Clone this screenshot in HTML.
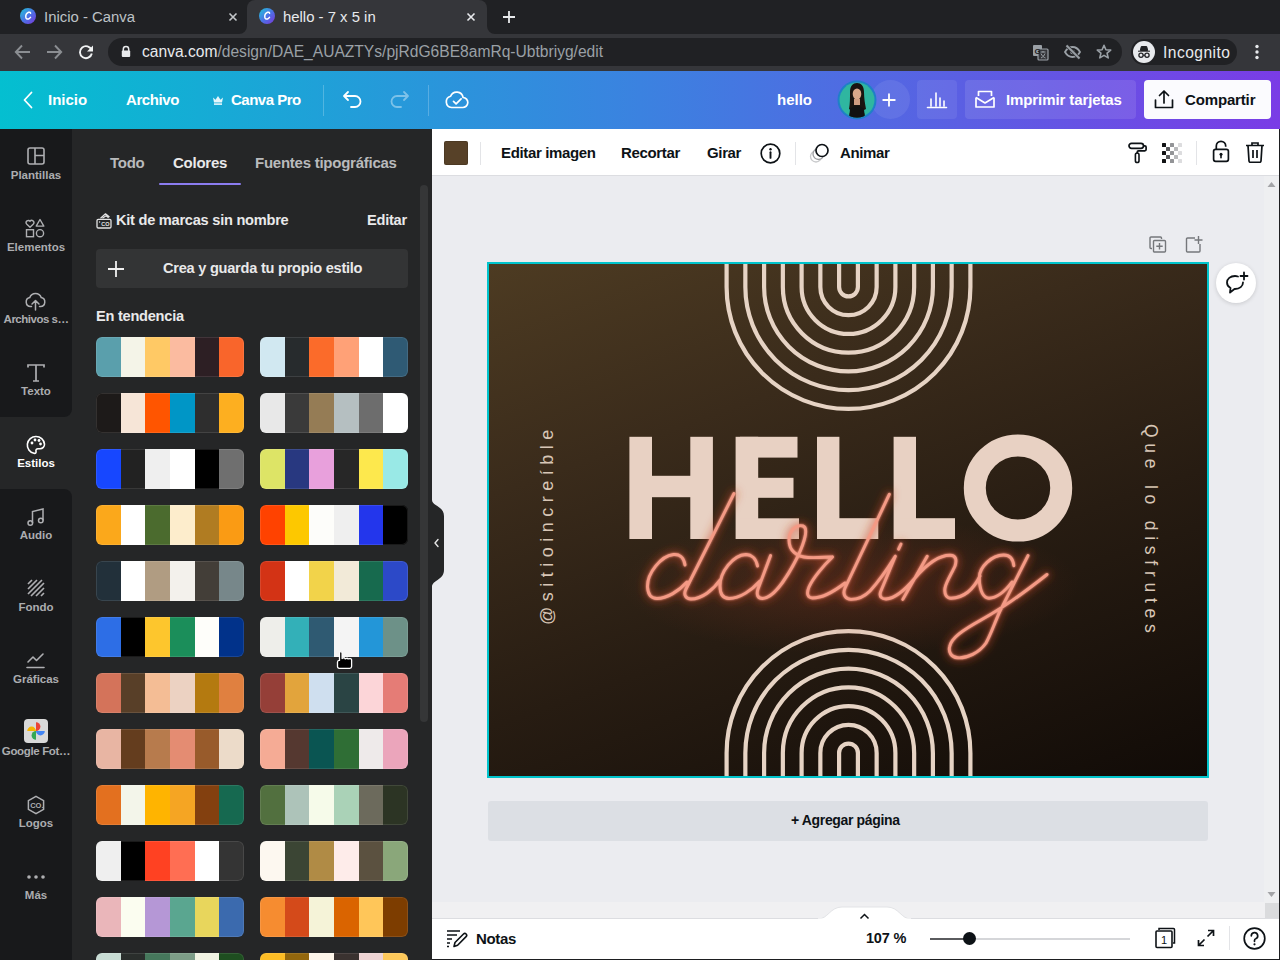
<!DOCTYPE html>
<html><head><meta charset="utf-8">
<style>
*{margin:0;padding:0;box-sizing:border-box}
html,body{width:1280px;height:960px;overflow:hidden;background:#ebecf0;font-family:"Liberation Sans",sans-serif}
.a{position:absolute}
svg{display:block}
/* chrome */
#tabs{left:0;top:0;width:1280px;height:34px;background:#202124}
#tb{left:0;top:34px;width:1280px;height:37px;background:#35363a}
.ttl{font-size:14px;color:#bdc1c6;white-space:nowrap}
/* header */
#hdr{left:0;top:71px;width:1280px;height:58px;background:linear-gradient(90deg,#04bfd0 0%,#3b82e0 50%,#7a3ce6 100%)}
.ht{color:#fff;font-weight:700;font-size:15px;white-space:nowrap}
/* sidebar */
#side{left:0;top:129px;width:72px;height:831px;background:#252627}
.sb{background:#18191b}
.si{position:absolute;left:0;width:72px;text-align:center;color:#a9aaad;font-size:11.5px;font-weight:700;white-space:nowrap}
/* panel */
#panel{left:72px;top:129px;width:360px;height:831px;background:#252627;overflow:hidden}
.pt{color:#c9cacc;font-size:15px;font-weight:700;white-space:nowrap;letter-spacing:-.25px}
.pal{position:absolute;width:148px;height:40px;border-radius:6px;overflow:hidden;display:flex}
.pal i{flex:1;display:block}
.pal:after{content:"";position:absolute;left:0;top:0;right:0;bottom:0;border-radius:6px;box-shadow:inset 0 0 0 1px rgba(255,255,255,.1)}
/* canvas */
#tool{left:432px;top:129px;width:848px;height:47px;background:#fff;border-bottom:1px solid #dcdde1}
.tt{color:#0d1216;font-size:15px;font-weight:700;white-space:nowrap;letter-spacing:-.35px}
#bot{left:432px;top:918px;width:848px;height:42px;background:#fff;border-top:1px solid #dcdde1}
</style></head><body>

<!-- CHROME TABS -->
<div id="tabs" class="a"></div>
<div class="a" style="left:247px;top:0px;width:240px;height:34px;background:#35363a;border-radius:8px 8px 0 0"></div>
<svg class="a" style="left:239px;top:26px" width="8" height="8"><path d="M0 8 A8 8 0 0 0 8 0 V8Z" fill="#35363a"/></svg>
<svg class="a" style="left:487px;top:26px" width="8" height="8"><path d="M8 8 A8 8 0 0 1 0 0 V8Z" fill="#35363a"/></svg>
<svg class="a" style="left:20px;top:8px" width="16" height="16"><defs><linearGradient id="cg" x1="0" y1="0" x2="1" y2="1"><stop offset="0" stop-color="#1ec7d8"/><stop offset=".55" stop-color="#4f6de6"/><stop offset="1" stop-color="#7b35d8"/></linearGradient></defs><circle cx="8" cy="8" r="8" fill="url(#cg)"/><path d="M10.6 5.2c-.3-.9-1.2-1.2-2-.9C6.9 5 5.6 7.3 5.8 9.3c.2 1.7 1.9 2.2 3.4 1.3.6-.3 1-.8 1.3-1.2" fill="none" stroke="#fff" stroke-width="1.5" stroke-linecap="round"/></svg>
<svg class="a" style="left:259px;top:8px" width="16" height="16"><circle cx="8" cy="8" r="8" fill="url(#cg)"/><path d="M10.6 5.2c-.3-.9-1.2-1.2-2-.9C6.9 5 5.6 7.3 5.8 9.3c.2 1.7 1.9 2.2 3.4 1.3.6-.3 1-.8 1.3-1.2" fill="none" stroke="#fff" stroke-width="1.5" stroke-linecap="round"/></svg>
<div class="a ttl" style="left:44px;top:9px;font-size:14.9px">Inicio - Canva</div>
<div class="a ttl" style="left:283px;top:9px;font-size:14.9px;color:#e8eaed">hello - 7 x 5 in</div>
<svg class="a" style="left:228px;top:12px" width="10" height="10"><path d="M1.5 1.5l7 7M8.5 1.5l-7 7" stroke="#c4c7ca" stroke-width="1.6"/></svg>
<svg class="a" style="left:466px;top:12px" width="10" height="10"><path d="M1.5 1.5l7 7M8.5 1.5l-7 7" stroke="#e8eaed" stroke-width="1.6"/></svg>
<svg class="a" style="left:502px;top:10px" width="14" height="14"><path d="M7 1v12M1 7h12" stroke="#e8eaed" stroke-width="1.8"/></svg>

<div id="tb" class="a"></div>
<svg class="a" style="left:14px;top:44px" width="17" height="16"><path d="M16 8H2M8 1.5L1.8 8 8 14.5" fill="none" stroke="#8b8e92" stroke-width="1.9"/></svg>
<svg class="a" style="left:46px;top:44px" width="17" height="16"><path d="M1 8h14M9 1.5L15.2 8 9 14.5" fill="none" stroke="#8b8e92" stroke-width="1.9"/></svg>
<svg class="a" style="left:78px;top:44px" width="16" height="16"><path d="M13.6 6.2A6 6 0 1 0 13.8 9.5" fill="none" stroke="#f1f3f4" stroke-width="1.9"/><path d="M15 1.5v6h-6z" fill="#f1f3f4"/></svg>
<div class="a" style="left:108px;top:38px;width:1014px;height:28px;background:#202124;border-radius:14px"></div>
<svg class="a" style="left:121px;top:45px" width="10" height="13"><path d="M2.3 6V4.2a2.7 2.7 0 0 1 5.4 0V6" fill="none" stroke="#e8eaed" stroke-width="1.5"/><rect x="0.8" y="5.6" width="8.4" height="6.4" rx="1" fill="#e8eaed"/></svg>
<div class="a ttl" style="left:142px;top:43px;font-size:15.6px;color:#e8eaed">canva.com<span style="color:#9aa0a6">/design/DAE_AUAZTYs/pjRdG6BE8amRq-Ubtbriyg/edit</span></div>
<svg class="a" style="left:1032px;top:44px" width="17" height="17"><rect x="1" y="1" width="9" height="11" rx="1" fill="#9aa0a6"/><rect x="6" y="5" width="10" height="11" rx="1" fill="#35363a" stroke="#9aa0a6" stroke-width="1.2"/><text x="2.5" y="10" font-size="8" font-weight="bold" fill="#202124" font-family="Liberation Sans">G</text><path d="M8.5 8h5M11 7v1.5M9 9.5c1 2.5 3 4 4.5 4.5M13 9.5c-.8 2-2 3.5-4 4.5" stroke="#9aa0a6" stroke-width="1" fill="none"/></svg>
<svg class="a" style="left:1064px;top:44px" width="17" height="16"><path d="M1 8c2-3.5 4.5-5 7.5-5s5.5 1.5 7.5 5c-2 3.5-4.5 5-7.5 5S3 11.5 1 8z" fill="none" stroke="#9aa0a6" stroke-width="1.8"/><circle cx="8.5" cy="8" r="2.3" fill="#9aa0a6"/><path d="M2.5 1.5l13 13" stroke="#35363a" stroke-width="3.5"/><path d="M2.5 1.5l13 13" stroke="#9aa0a6" stroke-width="1.8"/></svg>
<svg class="a" style="left:1096px;top:44px" width="16" height="16"><path d="M8 1.3l1.9 4.4 4.8.4-3.6 3.1 1.1 4.7L8 11.4l-4.2 2.5 1.1-4.7L1.3 6.1l4.8-.4z" fill="none" stroke="#9aa0a6" stroke-width="1.6" stroke-linejoin="round"/></svg>
<div class="a" style="left:1131px;top:39px;width:106px;height:26px;background:#202124;border-radius:13px"></div>
<svg class="a" style="left:1133px;top:41px" width="22" height="22"><circle cx="11" cy="11" r="11" fill="#e8eaed"/><path d="M5 10.2h12M7.3 9.5l1-4h5.4l1 4z" fill="#202124" stroke="#202124" stroke-width="1"/><circle cx="8" cy="14.3" r="2.1" fill="none" stroke="#202124" stroke-width="1.3"/><circle cx="14" cy="14.3" r="2.1" fill="none" stroke="#202124" stroke-width="1.3"/><path d="M10 14.3h2" stroke="#202124" stroke-width="1.1"/></svg>
<div class="a ttl" style="left:1163px;top:44px;font-size:15.6px;letter-spacing:.45px;color:#e8eaed">Incognito</div>
<svg class="a" style="left:1254px;top:44px" width="6" height="16"><circle cx="3" cy="2.5" r="1.7" fill="#e8eaed"/><circle cx="3" cy="8" r="1.7" fill="#e8eaed"/><circle cx="3" cy="13.5" r="1.7" fill="#e8eaed"/></svg>

<!-- CANVA HEADER -->
<div id="hdr" class="a"></div>
<svg class="a" style="left:22px;top:91px" width="12" height="18"><path d="M9.5 1.5L2.5 9l7 7.5" fill="none" stroke="#fff" stroke-width="1.8" stroke-linecap="round" stroke-linejoin="round"/></svg>
<div class="a ht" style="left:48px;top:91px">Inicio</div>
<div class="a ht" style="left:126px;top:91px;letter-spacing:-.4px">Archivo</div>
<svg class="a" style="left:212px;top:95px" width="12" height="10"><path d="M1 2.5l2.5 2.2L6 1l2.5 3.7L11 2.5 10 7.5H2z" fill="#e6f6fb"/><rect x="2" y="8.3" width="8" height="1.6" fill="#e6f6fb"/></svg>
<div class="a ht" style="left:231px;top:91px;letter-spacing:-.5px">Canva Pro</div>
<div class="a" style="left:323px;top:85px;width:1px;height:31px;background:rgba(255,255,255,.22)"></div>
<svg class="a" style="left:342px;top:90px" width="22" height="19"><path d="M6 2L2 6l4 4M2.5 6H13a5.5 5.5 0 0 1 0 11H9" fill="none" stroke="#fff" stroke-width="1.8" stroke-linecap="round" stroke-linejoin="round"/></svg>
<svg class="a" style="left:388px;top:90px" width="22" height="19"><path d="M16 2l4 4-4 4M19.5 6H9a5.5 5.5 0 0 0 0 11H13" fill="none" stroke="rgba(255,255,255,.4)" stroke-width="1.8" stroke-linecap="round" stroke-linejoin="round"/></svg>
<div class="a" style="left:428px;top:85px;width:1px;height:31px;background:rgba(255,255,255,.22)"></div>
<svg class="a" style="left:445px;top:90px" width="24" height="19"><path d="M6.5 17.5h11a5 5 0 0 0 .6-10A6.5 6.5 0 0 0 5.6 6.3 5.7 5.7 0 0 0 6.5 17.5z" fill="none" stroke="#fff" stroke-width="1.7" stroke-linejoin="round"/><path d="M8.5 11.3l2.6 2.6 5-5" fill="none" stroke="#fff" stroke-width="1.7" stroke-linecap="round" stroke-linejoin="round"/></svg>
<div class="a ht" style="left:777px;top:91px">hello</div>
<div class="a" style="left:871px;top:80px;width:39px;height:39px;border-radius:50%;background:rgba(255,255,255,.08)"></div>
<svg class="a" style="left:882px;top:93px" width="14" height="14"><path d="M7 1.2v11.6M1.2 7h11.6" stroke="#fff" stroke-width="1.8" stroke-linecap="round"/></svg>
<svg class="a" style="left:837px;top:80px" width="40" height="40"><defs><clipPath id="av"><circle cx="20" cy="20" r="17.5"/></clipPath></defs><circle cx="20" cy="20" r="19.5" fill="#1f7fc8"/><circle cx="20" cy="20" r="17.5" fill="#2fb6a0"/><g clip-path="url(#av)"><path d="M12 40c0-8 2-13 8-13s8 5 8 13z" fill="#151515"/><path d="M13 12c0-6 3-9 7-9s7 3 7 9c0 6 1 12 2 17l-4 2-5-4-5 4-3-2c1-5 1-11 1-17z" fill="#1a1410"/><ellipse cx="20" cy="14" rx="4.3" ry="5.5" fill="#d9a88a"/><path d="M17 19h6v6h-6z" fill="#cf9c80"/><path d="M13 29c2-2 4-3 7-3s5 1 7 3l1 11H12z" fill="#111"/></g></svg>
<div class="a" style="left:917px;top:80px;width:40px;height:39px;border-radius:4px;background:rgba(255,255,255,.08)"></div>
<svg class="a" style="left:926px;top:89px" width="22" height="20"><path d="M1.5 18.5h19M5 17V10M10 17V4M14 17V9M18 17V12" fill="none" stroke="#fff" stroke-width="1.6" stroke-linecap="round"/></svg>
<div class="a" style="left:965px;top:80px;width:171px;height:39px;background:rgba(255,255,255,.1);border-radius:4px"></div>
<svg class="a" style="left:974px;top:89px" width="22" height="20"><path d="M2 8.5v9.5h18V8.5" fill="none" stroke="#fff" stroke-width="1.7" stroke-linejoin="round"/><path d="M2 8.5L11 14l9-5.5M4.5 7V2.5h13V7" fill="none" stroke="#fff" stroke-width="1.7" stroke-linejoin="round"/></svg>
<div class="a ht" style="left:1006px;top:91px;letter-spacing:-.1px">Imprimir tarjetas</div>
<div class="a" style="left:1144px;top:80px;width:127px;height:39px;background:#fbfbfe;border-radius:4px"></div>
<svg class="a" style="left:1154px;top:89px" width="20" height="20"><path d="M10 14V2M5.5 6.5L10 2l4.5 4.5M1.5 11v7.5h17V11" fill="none" stroke="#0d1216" stroke-width="1.7" stroke-linecap="round" stroke-linejoin="round"/></svg>
<div class="a ht" style="left:1185px;top:91px;color:#0d1216;letter-spacing:-.15px">Compartir</div>

<!-- SIDEBAR -->
<div id="side" class="a">
  <div class="a sb" style="left:0;top:0;width:72px;height:288px;border-bottom-right-radius:8px"></div>
  <div class="a sb" style="left:0;top:360px;width:72px;height:471px;border-top-right-radius:8px"></div>
  <svg class="a" style="left:27px;top:18px" width="18" height="18" viewBox="0 0 18 18"><rect x="1" y="1" width="16" height="16" rx="2" fill="none" stroke="#aeafb2" stroke-width="1.6"/><path d="M8 1v16M8 8.5h9" stroke="#aeafb2" stroke-width="1.6"/></svg>
  <div class="si" style="top:40px;color:#acadb0">Plantillas</div>
  <svg class="a" style="left:25px;top:89px" width="22" height="22" viewBox="0 0 22 22"><path d="M5 9.3L1.6 5.9a2 2 0 0 1 3.4-2.6 2 2 0 0 1 3.4 2.6z" fill="none" stroke="#aeafb2" stroke-width="1.4" stroke-linejoin="round"/><path d="M15 1.5l3.8 6.6h-7.6z" fill="none" stroke="#aeafb2" stroke-width="1.4" stroke-linejoin="round"/><rect x="1.5" y="11.7" width="7" height="7" fill="none" stroke="#aeafb2" stroke-width="1.4"/><circle cx="15" cy="15.2" r="3.6" fill="none" stroke="#aeafb2" stroke-width="1.4"/></svg>
  <div class="si" style="top:112px;color:#acadb0">Elementos</div>
  <svg class="a" style="left:25px;top:162px" width="22" height="22" viewBox="0 0 22 22"><path d="M6.5 15.5H5.5a4.5 4.5 0 0 1-.7-8.9 6 6 0 0 1 11.4 0 4.5 4.5 0 0 1-.7 8.9h-1" fill="none" stroke="#aeafb2" stroke-width="1.5" stroke-linecap="round"/><path d="M10.5 19V10M7 13l3.5-3.5L14 13" fill="none" stroke="#aeafb2" stroke-width="1.5" stroke-linecap="round" stroke-linejoin="round"/></svg>
  <div class="si" style="top:184px;color:#acadb0;letter-spacing:-.5px">Archivos s…</div>
  <svg class="a" style="left:26px;top:234px" width="20" height="20" viewBox="0 0 20 20"><path d="M2 4.5V2h16v2.5M10 2v16M7 18h6" fill="none" stroke="#aeafb2" stroke-width="1.7"/></svg>
  <div class="si" style="top:256px;color:#acadb0">Texto</div>
  <svg class="a" style="left:26px;top:306px" width="20" height="20" viewBox="0 0 20 20"><path d="M10 1.5a8.5 8.5 0 0 0-2 16.8c1.6.4 2.4-.6 2-2-.4-1.3.5-2.6 1.9-2.6h2.2a4.4 4.4 0 0 0 4.4-4.6A8.5 8.5 0 0 0 10 1.5z" fill="none" stroke="#fff" stroke-width="1.6"/><circle cx="6" cy="8" r="1.4" fill="#fff"/><circle cx="9" cy="5" r="1.4" fill="#fff"/><circle cx="13" cy="5.5" r="1.4" fill="#fff"/><circle cx="14.5" cy="9" r="1.4" fill="#fff"/></svg>
  <div class="si" style="top:328px;color:#fff">Estilos</div>
  <svg class="a" style="left:26px;top:378px" width="20" height="20" viewBox="0 0 20 20"><path d="M6.5 16V4.5L17 2v11.5" fill="none" stroke="#aeafb2" stroke-width="1.5"/><circle cx="4.3" cy="16" r="2.3" fill="none" stroke="#aeafb2" stroke-width="1.5"/><circle cx="14.8" cy="13.5" r="2.3" fill="none" stroke="#aeafb2" stroke-width="1.5"/></svg>
  <div class="si" style="top:400px;color:#acadb0">Audio</div>
  <svg class="a" style="left:27px;top:450px" width="18" height="18" viewBox="0 0 18 18"><g stroke="#aeafb2" stroke-width="1.7" stroke-linecap="butt"><path d="M1 5L5 1M1 10l9-9M1 15L15 1M4 17L17 4M9 17l8-8M14 17l3-3"/></g></svg>
  <div class="si" style="top:472px;color:#acadb0">Fondo</div>
  <svg class="a" style="left:26px;top:522px" width="20" height="20" viewBox="0 0 20 20"><path d="M2 11l5-5 3.5 3.5L17 3M1 16.5h17" fill="none" stroke="#aeafb2" stroke-width="1.6" stroke-linecap="round" stroke-linejoin="round"/></svg>
  <div class="si" style="top:544px;color:#acadb0">Gráficas</div>
  <svg class="a" style="left:24px;top:590px" width="24" height="24" viewBox="0 0 24 24"><rect x="0" y="0" width="24" height="24" rx="4" fill="#d9d9d9"/><path d="M12 12H3.2A4.4 4.4 0 0 1 12 12z" fill="#f6b400"/><path d="M12 12V3.2A4.4 4.4 0 0 1 12 12z" fill="#ea4335"/><path d="M12 12h8.8A4.4 4.4 0 0 1 12 12z" fill="#4285f4"/><path d="M12 12v8.8A4.4 4.4 0 0 1 12 12z" fill="#34a853"/></svg>
  <div class="si" style="top:616px;color:#acadb0;letter-spacing:-.35px">Google Fot…</div>
  <svg class="a" style="left:26px;top:666px" width="20" height="20" viewBox="0 0 20 20"><path d="M10 1.3l7.6 4.4v8.6L10 18.7l-7.6-4.4V5.7z" fill="none" stroke="#aeafb2" stroke-width="1.5"/><text x="4.2" y="12.6" font-family="Liberation Sans" font-weight="bold" font-size="7.5" fill="#aeafb2">CO.</text></svg>
  <div class="si" style="top:688px;color:#acadb0">Logos</div>
  <svg class="a" style="left:26px;top:738px" width="20" height="20" viewBox="0 0 20 20"><circle cx="3" cy="10" r="1.8" fill="#aeafb2"/><circle cx="10" cy="10" r="1.8" fill="#aeafb2"/><circle cx="17" cy="10" r="1.8" fill="#aeafb2"/></svg>
  <div class="si" style="top:760px;color:#acadb0">Más</div>
</div>

<!-- PANEL -->
<div id="panel" class="a">
  <div class="a pt" style="left:38px;top:25px;color:#b9babc">Todo</div>
  <div class="a pt" style="left:101px;top:25px;color:#e9e9ea">Colores</div>
  <div class="a pt" style="left:183px;top:25px;color:#b9babc">Fuentes tipográficas</div>
  <div class="a" style="left:87px;top:54px;width:82px;height:2px;background:#8b7cf0;border-radius:1px"></div>
  <svg class="a" style="left:24px;top:83px" width="16" height="17" viewBox="0 0 16 17"><path d="M4.5 6.2L9.5 1.8l4 3.2M6.5 6.2l3.5-2.4 2.6 2" fill="none" stroke="#e3e3e4" stroke-width="1.2" stroke-linejoin="round"/><rect x="1" y="7.3" width="14" height="8.7" rx="1.3" fill="none" stroke="#e3e3e4" stroke-width="1.3"/><text x="5.2" y="14" font-family="Liberation Sans" font-weight="bold" font-size="5.5" fill="#e3e3e4">CO</text><circle cx="3.6" cy="10" r=".7" fill="#e3e3e4"/></svg>
  <div class="a pt" style="left:44px;top:83px;font-size:14.6px;color:#e9e9ea">Kit de marcas sin nombre</div>
  <div class="a pt" style="left:295px;top:83px;font-size:14.6px;color:#e9e9ea">Editar</div>
  <div class="a" style="left:24px;top:120px;width:312px;height:39px;background:#333435;border-radius:4px"></div>
  <svg class="a" style="left:36px;top:132px" width="16" height="16"><path d="M8 0v16M0 8h16" stroke="#f0f0f0" stroke-width="1.8"/></svg>
  <div class="a pt" style="left:91px;top:131px;font-size:14.6px;color:#e9e9ea">Crea y guarda tu propio estilo</div>
  <div class="a pt" style="left:24px;top:179px;font-size:14.6px;color:#e9e9ea">En tendencia</div>
  <div class="a" style="left:348px;top:56px;width:8px;height:537px;background:#353637;border-radius:4px"></div>
  <div class="pal" style="left:24px;top:208px"><i style="background:#5a9fac"></i><i style="background:#f4f4e8"></i><i style="background:#ffc965"></i><i style="background:#fbbba0"></i><i style="background:#2d1f24"></i><i style="background:#f9652b"></i></div>
  <div class="pal" style="left:188px;top:208px"><i style="background:#d1e8f1"></i><i style="background:#272b2d"></i><i style="background:#fb6b2a"></i><i style="background:#ffa177"></i><i style="background:#ffffff"></i><i style="background:#2f5a74"></i></div>
  <div class="pal" style="left:24px;top:264px"><i style="background:#1d1a19"></i><i style="background:#f6e5d7"></i><i style="background:#ff5500"></i><i style="background:#0096c6"></i><i style="background:#2e2e2e"></i><i style="background:#fdaf20"></i></div>
  <div class="pal" style="left:188px;top:264px"><i style="background:#e8e8e8"></i><i style="background:#3a3a3a"></i><i style="background:#957c55"></i><i style="background:#b5bfc1"></i><i style="background:#6d6d6d"></i><i style="background:#ffffff"></i></div>
  <div class="pal" style="left:24px;top:320px"><i style="background:#1747ff"></i><i style="background:#222222"></i><i style="background:#efefef"></i><i style="background:#ffffff"></i><i style="background:#000000"></i><i style="background:#6f6f6f"></i></div>
  <div class="pal" style="left:188px;top:320px"><i style="background:#dde466"></i><i style="background:#283880"></i><i style="background:#e8a0dc"></i><i style="background:#272727"></i><i style="background:#fde84d"></i><i style="background:#99e9e6"></i></div>
  <div class="pal" style="left:24px;top:376px"><i style="background:#fba81b"></i><i style="background:#ffffff"></i><i style="background:#4b6b2e"></i><i style="background:#fdedcc"></i><i style="background:#b07c22"></i><i style="background:#fa9b14"></i></div>
  <div class="pal" style="left:188px;top:376px"><i style="background:#ff4200"></i><i style="background:#fdc800"></i><i style="background:#fdfdfa"></i><i style="background:#efefef"></i><i style="background:#2336ec"></i><i style="background:#000000"></i></div>
  <div class="pal" style="left:24px;top:432px"><i style="background:#22303a"></i><i style="background:#ffffff"></i><i style="background:#b09c82"></i><i style="background:#f3f1ec"></i><i style="background:#433e38"></i><i style="background:#77878a"></i></div>
  <div class="pal" style="left:188px;top:432px"><i style="background:#d33315"></i><i style="background:#ffffff"></i><i style="background:#f2d34a"></i><i style="background:#f2ead8"></i><i style="background:#176a4e"></i><i style="background:#2c49c8"></i></div>
  <div class="pal" style="left:24px;top:488px"><i style="background:#2d6ee6"></i><i style="background:#000000"></i><i style="background:#fdc62d"></i><i style="background:#1b8e5a"></i><i style="background:#fefefa"></i><i style="background:#01328a"></i></div>
  <div class="pal" style="left:188px;top:488px"><i style="background:#eeeeea"></i><i style="background:#33b0b8"></i><i style="background:#2f5a72"></i><i style="background:#f4f4f4"></i><i style="background:#2396d8"></i><i style="background:#6d9188"></i></div>
  <div class="pal" style="left:24px;top:544px"><i style="background:#d4735a"></i><i style="background:#583f28"></i><i style="background:#f4bd95"></i><i style="background:#ecd2c2"></i><i style="background:#b47a10"></i><i style="background:#e08040"></i></div>
  <div class="pal" style="left:188px;top:544px"><i style="background:#953f38"></i><i style="background:#e2a43c"></i><i style="background:#cfdfef"></i><i style="background:#2a4444"></i><i style="background:#fcd5d8"></i><i style="background:#e57c76"></i></div>
  <div class="pal" style="left:24px;top:600px"><i style="background:#e8b5a3"></i><i style="background:#643d1e"></i><i style="background:#b77b4d"></i><i style="background:#e48c72"></i><i style="background:#985b2b"></i><i style="background:#ecdbc9"></i></div>
  <div class="pal" style="left:188px;top:600px"><i style="background:#f5ab95"></i><i style="background:#553830"></i><i style="background:#0a5552"></i><i style="background:#2f6e35"></i><i style="background:#eeeaea"></i><i style="background:#eba5bb"></i></div>
  <div class="pal" style="left:24px;top:656px"><i style="background:#e3701f"></i><i style="background:#f3f5ea"></i><i style="background:#ffb400"></i><i style="background:#f5a523"></i><i style="background:#83400f"></i><i style="background:#166950"></i></div>
  <div class="pal" style="left:188px;top:656px"><i style="background:#52703f"></i><i style="background:#adc3b9"></i><i style="background:#f6fbea"></i><i style="background:#aad2b7"></i><i style="background:#6c6a5c"></i><i style="background:#2c3424"></i></div>
  <div class="pal" style="left:24px;top:712px"><i style="background:#efefef"></i><i style="background:#000000"></i><i style="background:#ff4122"></i><i style="background:#ff6e53"></i><i style="background:#ffffff"></i><i style="background:#343434"></i></div>
  <div class="pal" style="left:188px;top:712px"><i style="background:#fdf8f0"></i><i style="background:#3b4534"></i><i style="background:#b08b45"></i><i style="background:#feecea"></i><i style="background:#5b5140"></i><i style="background:#8aa77a"></i></div>
  <div class="pal" style="left:24px;top:768px"><i style="background:#eab6ba"></i><i style="background:#fbfdf0"></i><i style="background:#b597d6"></i><i style="background:#5aa690"></i><i style="background:#e8d65c"></i><i style="background:#3b6aae"></i></div>
  <div class="pal" style="left:188px;top:768px"><i style="background:#f68c30"></i><i style="background:#d44a1a"></i><i style="background:#f5f3d8"></i><i style="background:#da6400"></i><i style="background:#ffc659"></i><i style="background:#7d3d00"></i></div>
  <div class="pal" style="left:24px;top:824px"><i style="background:#c8dcd4"></i><i style="background:#2a2e2c"></i><i style="background:#46785c"></i><i style="background:#7d9d87"></i><i style="background:#f1f3e3"></i><i style="background:#1e4e20"></i></div>
  <div class="pal" style="left:188px;top:824px"><i style="background:#fdbd25"></i><i style="background:#93670d"></i><i style="background:#fdf5ea"></i><i style="background:#3a3230"></i><i style="background:#eed4d4"></i><i style="background:#fdc85a"></i></div>
</div>
<svg class="a" style="left:432px;top:500px" width="13" height="87" viewBox="0 0 13 87"><path d="M0 0C0 6 12 6 12 16V70C12 80 0 80 0 87z" fill="#252627"/><path d="M6 39.5l-3 3.5 3 3.5" fill="none" stroke="#e6e6e6" stroke-width="1.4" stroke-linecap="round" stroke-linejoin="round"/></svg>

<!-- CANVAS -->
<div id="tool" class="a"></div>
<div class="a" style="left:444px;top:141px;width:24px;height:24px;background:#574128;border-radius:2px;box-shadow:inset 0 0 0 1px rgba(0,0,0,.12)"></div>
<div class="a" style="left:480px;top:142px;width:1px;height:23px;background:#e3e4e7"></div>
<div class="a tt" style="left:501px;top:144px">Editar imagen</div>
<div class="a tt" style="left:621px;top:144px">Recortar</div>
<div class="a tt" style="left:707px;top:144px">Girar</div>
<svg class="a" style="left:760px;top:143px" width="21" height="21"><circle cx="10.5" cy="10.5" r="9.3" fill="none" stroke="#0d1216" stroke-width="1.7"/><path d="M10.5 9.3v5.6" stroke="#0d1216" stroke-width="1.9" stroke-linecap="round"/><circle cx="10.5" cy="6.2" r="1.2" fill="#0d1216"/></svg>
<div class="a" style="left:795px;top:142px;width:1px;height:23px;background:#e3e4e7"></div>
<svg class="a" style="left:809px;top:142px" width="22" height="22"><circle cx="7" cy="14.5" r="5.5" fill="none" stroke="#c8c9cb" stroke-width="1.3"/><circle cx="9.5" cy="12" r="5.5" fill="#fff" stroke="#9c9da0" stroke-width="1.3"/><circle cx="13" cy="8.5" r="6" fill="#fff" stroke="#0d1216" stroke-width="1.7"/></svg>
<div class="a tt" style="left:840px;top:144px">Animar</div>
<svg class="a" style="left:1127px;top:142px" width="22" height="22"><rect x="2" y="1.3" width="14.5" height="5" rx="2.5" fill="none" stroke="#0d1216" stroke-width="1.7"/><path d="M16.5 3.8h1.3a1.3 1.3 0 0 1 1.3 1.3v2.5a1.3 1.3 0 0 1-1.3 1.3H11.5a1.3 1.3 0 0 0-1.3 1.3v1.3" fill="none" stroke="#0d1216" stroke-width="1.7"/><rect x="8.4" y="11" width="3.6" height="9.5" rx="1.8" fill="none" stroke="#0d1216" stroke-width="1.6"/></svg>
<svg class="a" style="left:1162px;top:143px" width="20" height="20"><rect x="0" y="0" width="4" height="4" rx=".6" fill="#111214"/><rect x="0" y="8" width="4" height="4" rx=".6" fill="#111214"/><rect x="0" y="16" width="4" height="4" rx=".6" fill="#111214"/><rect x="4" y="4" width="4" height="4" rx=".6" fill="#58595c"/><rect x="4" y="12" width="4" height="4" rx=".6" fill="#58595c"/><rect x="8" y="0" width="4" height="4" rx=".6" fill="#939497"/><rect x="8" y="8" width="4" height="4" rx=".6" fill="#939497"/><rect x="8" y="16" width="4" height="4" rx=".6" fill="#939497"/><rect x="12" y="4" width="4" height="4" rx=".6" fill="#b9babc"/><rect x="12" y="12" width="4" height="4" rx=".6" fill="#b9babc"/><rect x="16" y="0" width="4" height="4" rx=".6" fill="#dcdcde"/><rect x="16" y="8" width="4" height="4" rx=".6" fill="#dcdcde"/><rect x="16" y="16" width="4" height="4" rx=".6" fill="#dcdcde"/></svg>
<div class="a" style="left:1196px;top:141px;width:1px;height:24px;background:#e3e4e7"></div>
<svg class="a" style="left:1211px;top:140px" width="20" height="23"><path d="M5.3 9.5V6a4.7 4.7 0 0 1 9.4 0v.8" fill="none" stroke="#0d1216" stroke-width="1.7"/><rect x="2.6" y="9.3" width="14.8" height="12" rx="2" fill="none" stroke="#0d1216" stroke-width="1.7"/><circle cx="10" cy="14.2" r="1.5" fill="#0d1216"/><path d="M10 14.5v3.3" stroke="#0d1216" stroke-width="1.6" stroke-linecap="round"/></svg>
<svg class="a" style="left:1245px;top:141px" width="20" height="22"><path d="M1 4.5h18M7 4.5V2h6v2.5" fill="none" stroke="#0d1216" stroke-width="1.7"/><path d="M3 4.5l1 15.5a1.5 1.5 0 0 0 1.5 1.3h9a1.5 1.5 0 0 0 1.5-1.3l1-15.5" fill="none" stroke="#0d1216" stroke-width="1.7"/><path d="M8 9v8M12 9v8" stroke="#0d1216" stroke-width="1.7"/></svg>

<!-- canvas scrollbar -->
<div class="a" style="left:1264px;top:176px;width:15px;height:742px;background:#eeeff1"></div>
<div class="a" style="left:1264px;top:903px;width:15px;height:15px;background:#dadbdd"></div>
<svg class="a" style="left:1267px;top:181px" width="9" height="7"><path d="M4.5 1L8.5 6h-8z" fill="#a3a4a7"/></svg>
<svg class="a" style="left:1267px;top:891px" width="9" height="7"><path d="M4.5 6L8.5 1h-8z" fill="#a3a4a7"/></svg>
<svg class="a" style="left:436px;top:905px" width="7" height="9"><path d="M1 4.5L6 .5v8z" fill="#a3a4a7"/></svg>
<svg class="a" style="left:1254px;top:905px" width="7" height="9"><path d="M6 4.5L1 .5v8z" fill="#a3a4a7"/></svg>

<!-- page icons -->
<svg class="a" style="left:1149px;top:236px" width="18" height="17"><path d="M3 12.5H2a1 1 0 0 1-1-1V2a1 1 0 0 1 1-1h9.5a1 1 0 0 1 1 1v1" fill="none" stroke="#75777b" stroke-width="1.4"/><rect x="4.5" y="4.5" width="12" height="11.5" rx="1" fill="none" stroke="#75777b" stroke-width="1.4"/><path d="M10.5 7v6.5M7.3 10.2h6.4" stroke="#75777b" stroke-width="1.4"/></svg>
<svg class="a" style="left:1185px;top:235px" width="18" height="18"><path d="M10 3H2.5a1 1 0 0 0-1 1v12a1 1 0 0 0 1 1h11.5a1 1 0 0 0 1-1V9" fill="none" stroke="#75777b" stroke-width="1.4"/><path d="M13.5 1v8M9.5 5h8" stroke="#75777b" stroke-width="1.4"/></svg>
<div class="a" style="left:1216px;top:263px;width:40px;height:40px;border-radius:50%;background:#fff;box-shadow:0 1px 4px rgba(0,0,0,.15)"></div>
<svg class="a" style="left:1225px;top:271px" width="24" height="24"><path d="M13 5.5c-1-.3-2-.5-3-.5-4.7 0-8 2.8-8 6.5 0 2.3 1.3 4.3 3.5 5.5L5 21.5l4.5-3.5c.2 0 .4 0 .5 0 4.7 0 8-2.8 8-6.5" fill="none" stroke="#0d1216" stroke-width="1.8" stroke-linejoin="round" stroke-linecap="round"/><path d="M19 1.5v7M15.5 5h7" stroke="#0d1216" stroke-width="1.8" stroke-linecap="round"/></svg>

<!-- DESIGN -->
<div class="a" style="left:487px;top:262px;width:722px;height:516px;background:#00c4cc"></div>
<div class="a" id="design" style="left:489px;top:264px;width:718px;height:512px;overflow:hidden;background:linear-gradient(160deg,#4d3b22 0%,#3a2b1b 30%,#271c12 60%,#110b07 100%)">
<svg class="a" style="left:0;top:0" width="718" height="512" viewBox="489 264 718 512">
<defs>
<filter id="blur4" x="-20%" y="-40%" width="140%" height="180%"><feGaussianBlur stdDeviation="4"/></filter><filter id="glow" x="-20%" y="-40%" width="140%" height="180%"><feGaussianBlur stdDeviation="1.2" result="b"/><feMerge><feMergeNode in="b"/><feMergeNode in="SourceGraphic"/></feMerge></filter>
<radialGradient id="halo" cx="0.5" cy="0.5" r="0.5"><stop offset="0" stop-color="#c2472c" stop-opacity=".22"/><stop offset="1" stop-color="#c2472c" stop-opacity="0"/></radialGradient>
</defs>
<path transform="translate(0.5 0)" d="M838.60,250 V287 A9.40,9.40 0 0 0 857.40,287 V250 M819.85,250 V287 A28.15,28.15 0 0 0 876.15,287 V250 M801.10,250 V287 A46.90,46.90 0 0 0 894.90,287 V250 M782.35,250 V287 A65.65,65.65 0 0 0 913.65,287 V250 M763.60,250 V287 A84.40,84.40 0 0 0 932.40,287 V250 M744.85,250 V287 A103.15,103.15 0 0 0 951.15,287 V250 M726.10,250 V287 A121.90,121.90 0 0 0 969.90,287 V250 " fill="none" stroke="#e6d3c4" stroke-width="4.2"/>
<path transform="translate(0.5 0)" d="M838.60,790 V753 A9.40,9.40 0 0 1 857.40,753 V790 M819.85,790 V753 A28.15,28.15 0 0 1 876.15,753 V790 M801.10,790 V753 A46.90,46.90 0 0 1 894.90,753 V790 M782.35,790 V753 A65.65,65.65 0 0 1 913.65,753 V790 M763.60,790 V753 A84.40,84.40 0 0 1 932.40,753 V790 M744.85,790 V753 A103.15,103.15 0 0 1 951.15,753 V790 M726.10,790 V753 A121.90,121.90 0 0 1 969.90,753 V790 " fill="none" stroke="#e6d3c4" stroke-width="4.2"/>
<ellipse cx="850" cy="585" rx="230" ry="70" fill="url(#halo)"/>
<g fill="#e8d1c3">
<rect x="629.4" y="436.8" width="22.6" height="102.2"/><rect x="690.3" y="436.8" width="22.6" height="102.2"/><rect x="640" y="475.8" width="60" height="21.4"/>
<rect x="735.6" y="436.8" width="22.6" height="102.2"/><rect x="740" y="436.8" width="57.5" height="20.8"/><rect x="740" y="477.8" width="53.5" height="20"/><rect x="740" y="518.3" width="59" height="20.7"/>
<rect x="817" y="436.8" width="22.4" height="102.2"/><rect x="825" y="518.2" width="53.3" height="20.8"/>
<rect x="893.6" y="436.8" width="22.4" height="102.2"/><rect x="900" y="518.2" width="55" height="20.8"/>
</g>
<ellipse cx="1018" cy="488" rx="43.2" ry="42.6" fill="none" stroke="#e8d1c3" stroke-width="22"/>
<path d="M685,565 C684,557 679,554 673.5,554.5 C661,556 647,573 647.5,587 C648,595 652,598.5 657,598.5 C667,598.5 679,591 687,582 M734,493.5 L686,589 C683,595 686,599 691,599 C702,599 713,590 720,580 M757.5,566 C756,558 751,554.5 746,554.5 C733,555 720,572 720,586 C720,595 724,598.5 729,598.5 C740,598.5 752,590 760,581 M770.6,555.6 L758,589 C756,595 758,598.5 762.5,598.5 C775,598 790,572 798,556 C804,543 809,528 803,526 C796,524 789,531 789,540 C789,551 797,557 808,557.5 C818,558 826,557 832.5,557 M832.5,557 C824,565 813,578 809,587 C806,594 808,598 812.5,598 C824,598 836,590 845,583 M889.4,494.2 L845,588 C842,595 846,599.4 851,599.4 C858,599.4 864,597 870,591 C880,580 888,568 895.3,556.25 M895.3,556.25 L880.5,592 C879,597 882,599 886,599 C894,598.5 905,590 915,578 C927,564 940,555.3 950,555.3 C956,555.3 957,560 955,566 C952,573 946,582 945,588 C944,595 947,598.2 951,598.2 C958,598 963,596 968,592 C973,588 977,582 980,576 M901,544 L898.6,549.2 M927.2,556.25 L902.8,599.4 M1013.8,565.7 C1013,558 1009,555 1003.6,555 C992,555 979,567 979.3,578 C979.5,592 984,598.2 989,598.2 C998,598 1006,590 1012,582 M1028,555.6 L999.6,611.8 C995,622 991,634 986,643 C979,653 967,658.5 957.6,657.8 C951,657.3 948.5,652 949.5,647 C951,638 963,630 981,620 C1001,609 1025,592 1047,574.5 " fill="none" stroke="#c9472b" stroke-opacity=".55" stroke-width="7" stroke-linecap="round" stroke-linejoin="round" filter="url(#blur4)"/><path d="M685,565 C684,557 679,554 673.5,554.5 C661,556 647,573 647.5,587 C648,595 652,598.5 657,598.5 C667,598.5 679,591 687,582 M734,493.5 L686,589 C683,595 686,599 691,599 C702,599 713,590 720,580 M757.5,566 C756,558 751,554.5 746,554.5 C733,555 720,572 720,586 C720,595 724,598.5 729,598.5 C740,598.5 752,590 760,581 M770.6,555.6 L758,589 C756,595 758,598.5 762.5,598.5 C775,598 790,572 798,556 C804,543 809,528 803,526 C796,524 789,531 789,540 C789,551 797,557 808,557.5 C818,558 826,557 832.5,557 M832.5,557 C824,565 813,578 809,587 C806,594 808,598 812.5,598 C824,598 836,590 845,583 M889.4,494.2 L845,588 C842,595 846,599.4 851,599.4 C858,599.4 864,597 870,591 C880,580 888,568 895.3,556.25 M895.3,556.25 L880.5,592 C879,597 882,599 886,599 C894,598.5 905,590 915,578 C927,564 940,555.3 950,555.3 C956,555.3 957,560 955,566 C952,573 946,582 945,588 C944,595 947,598.2 951,598.2 C958,598 963,596 968,592 C973,588 977,582 980,576 M901,544 L898.6,549.2 M927.2,556.25 L902.8,599.4 M1013.8,565.7 C1013,558 1009,555 1003.6,555 C992,555 979,567 979.3,578 C979.5,592 984,598.2 989,598.2 C998,598 1006,590 1012,582 M1028,555.6 L999.6,611.8 C995,622 991,634 986,643 C979,653 967,658.5 957.6,657.8 C951,657.3 948.5,652 949.5,647 C951,638 963,630 981,620 C1001,609 1025,592 1047,574.5 " fill="none" stroke="#f49a85" stroke-width="2.9" stroke-linecap="round" stroke-linejoin="round" filter="url(#glow)"/>
</svg>
<div class="a" style="left:49px;top:361px;width:0;height:0"><div style="position:absolute;left:0;top:0;transform:rotate(-90deg);transform-origin:0 0;white-space:nowrap;font-size:18px;letter-spacing:5.5px;color:#d8c6b6;line-height:1">@sitioincreíble</div></div>
<div class="a" style="left:670px;top:160px;width:0;height:0"><div style="position:absolute;left:0;top:0;transform:rotate(90deg);transform-origin:0 0;white-space:nowrap;font-size:17.5px;letter-spacing:5.75px;color:#d8c6b6;line-height:1">Que lo disfrutes</div></div>
</div>

<!-- add page -->
<div class="a" style="left:488px;top:801px;width:720px;height:40px;background:#dcdfe4;border-radius:3px"></div>
<div class="a tt" style="left:791px;top:812px;font-size:14px">+ Agregar página</div>

<!-- bottom bar -->
<div id="bot" class="a"></div>
<div class="a" style="left:432px;top:902px;width:833px;height:16px;background:#f0f0f2"></div>
<svg class="a" style="left:818px;top:905px" width="93" height="15"><path d="M0 14C10 14 12 2 24 2H69C81 2 83 14 93 14V15H0z" fill="#fff" stroke="#e2e3e6" stroke-width="1"/><rect x="0" y="13.5" width="93" height="2" fill="#fff"/></svg>
<svg class="a" style="left:859px;top:913px" width="11" height="7"><path d="M1.5 5.5L5.5 1.5l4 4" fill="none" stroke="#0d1216" stroke-width="1.5"/></svg>
<svg class="a" style="left:446px;top:928px" width="22" height="20"><path d="M1 3h13M1 7h10M1 11h5M1 15h3M1 18.5h2" stroke="#0d1216" stroke-width="1.6"/><path d="M8 18.5l1-4 8.5-8.5a1.8 1.8 0 0 1 2.6 2.6L11.6 17.2z" fill="none" stroke="#0d1216" stroke-width="1.6" stroke-linejoin="round"/></svg>
<div class="a tt" style="left:476px;top:930px">Notas</div>
<div class="a tt" style="left:866px;top:930px;font-size:14.5px;letter-spacing:-.2px">107 %</div>
<div class="a" style="left:930px;top:938px;width:200px;height:2px;background:#d5d6d9"></div>
<div class="a" style="left:930px;top:938px;width:40px;height:2px;background:#5a5b5e"></div>
<div class="a" style="left:963px;top:932px;width:13px;height:13px;border-radius:50%;background:#0d1216"></div>
<svg class="a" style="left:1155px;top:926px" width="21" height="23"><path d="M4 4V2.5h14.5a1 1 0 0 1 1 1V17H18" fill="none" stroke="#0d1216" stroke-width="1.5"/><rect x="1" y="5" width="16" height="16.5" rx="1" fill="none" stroke="#0d1216" stroke-width="1.6"/><text x="6" y="17.5" font-family="Liberation Sans" font-size="11" fill="#0d1216">1</text></svg>
<svg class="a" style="left:1197px;top:929px" width="18" height="18"><path d="M11 1.5h5.5V7M16.5 1.5l-6 6M7 16.5H1.5V11M1.5 16.5l6-6" fill="none" stroke="#0d1216" stroke-width="1.7"/></svg>
<div class="a" style="left:1229px;top:926px;width:1px;height:24px;background:#e3e4e7"></div>
<svg class="a" style="left:1243px;top:927px" width="23" height="23"><circle cx="11.5" cy="11.5" r="10.3" fill="none" stroke="#0d1216" stroke-width="1.7"/><path d="M8.3 8.8a3.2 3.2 0 1 1 4.4 3c-.8.3-1.2.9-1.2 1.8v.7" fill="none" stroke="#0d1216" stroke-width="1.7" stroke-linecap="round"/><circle cx="11.5" cy="17.3" r="1.1" fill="#0d1216"/></svg>
<div class="a" style="left:1279px;top:129px;width:1px;height:831px;background:#1d1e20"></div>
<div class="a" style="left:432px;top:959px;width:848px;height:1px;background:#1d1e20"></div>
<svg class="a" style="left:335px;top:650px" width="19" height="20" viewBox="0 0 19 20"><path d="M4.5 3.2c0-1 .6-1.6 1.3-1.6s1.3.6 1.3 1.6v5.3l1.2-.6c.6-.3 1.3 0 1.6.4l.3.5 1.3-.5c.6-.2 1.2.1 1.5.6l2.2-.3c.8-.1 1.4.5 1.4 1.3v6.7c0 1-.8 1.8-1.8 1.8H4.2c-1 0-1.7-.8-1.7-1.8v-4.5c0-.9.6-1.6 1.5-1.7h.5z" fill="#000" stroke="#fff" stroke-width="1.3" stroke-linejoin="round"/></svg>
</body></html>
